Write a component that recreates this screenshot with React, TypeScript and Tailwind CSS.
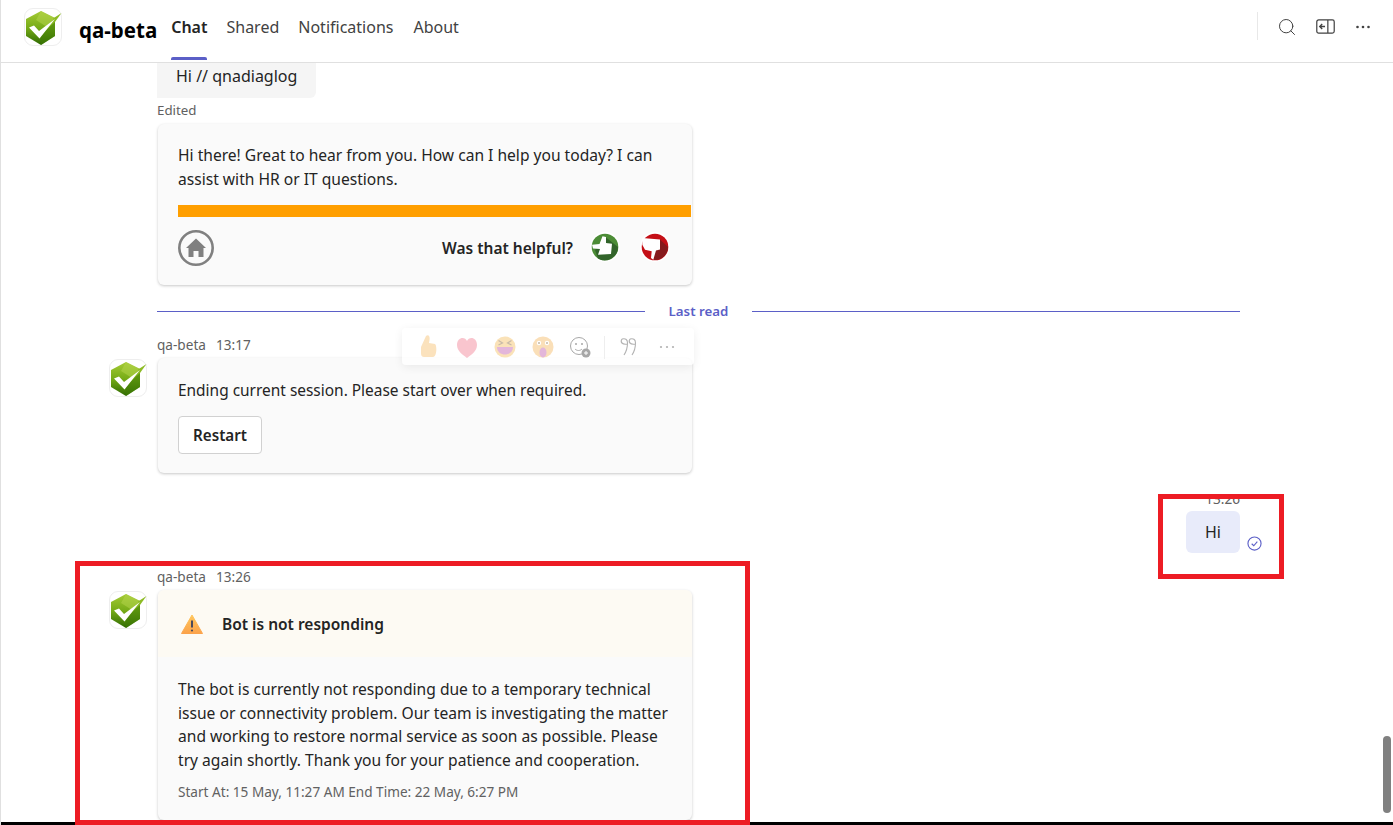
import { Search } from "lucide-react";

const font = "font-['Noto_Sans',sans-serif]";

const Logo = ({ className = "" }: { className?: string }) => (
  <div className={`h-[38px] w-[38px] shrink-0 rounded-[9px] border border-[#eeeeee] bg-white ${className}`}>
    <svg viewBox="0 0 38 38" className="h-[38px] w-[38px] -ml-px -mt-px">
      <defs>
        <linearGradient id="hex" x1="0" y1="0" x2="0" y2="1">
          <stop offset="0" stopColor="#a5cb35" />
          <stop offset="0.5" stopColor="#76ab17" />
          <stop offset="1" stopColor="#2f6a02" />
        </linearGradient>
      </defs>
      <path d="M17 3 L31 10 L31 28 L17 37 L2 28 L2 11 Z" fill="url(#hex)" />
      <path d="M17 3 L31 10 L23 19 L12 12 Z" fill="#b2d44a" opacity="0.55" />
      <path d="M17 37 L31 28 L31 14 L17 27 Z" fill="#3f7c06" opacity="0.55" />
      <path d="M29 10.500 L37.500 5 L31 14 Z" fill="#8dbb25" />
      <path d="M5 19.500 L10 17.500 L15 23 L31 11 L15.500 30.500 Z" fill="white" />
    </svg>
  </div>
);

const Card = ({ children, className = "" }: { children: React.ReactNode; className?: string }) => (
  <div className={`w-[534px] rounded-[6px] bg-[#fafafa] shadow-[0_1px_3px_rgba(0,0,0,0.22)] ${className}`}>
    {children}
  </div>
);

const Meta = ({ time }: { time: string }) => (
  <div className="ml-[48px] flex gap-[10px] text-[13.600px] leading-[16px] text-[#616161]">
    <span>qa-beta</span>
    <span>{time}</span>
  </div>
);

const HomeIcon = () => (
  <svg viewBox="0 0 36 36" className="h-[36px] w-[36px]">
    <circle cx="18" cy="18" r="16.700" fill="none" stroke="#808080" strokeWidth="2.600" />
    <path d="M18 8.500 L28 18 L25.500 18 L25.500 27 L20.500 27 L20.500 21 L15.500 21 L15.500 27 L10.500 27 L10.500 18 L8 18 Z" fill="#808080" />
  </svg>
);

const ThumbUp = () => (
  <svg viewBox="0 0 30 30" className="-mt-[2px] h-[30px] w-[30px]">
    <circle cx="15" cy="15" r="15" fill="white" />
    <circle cx="15" cy="15" r="13.300" fill="#4c8c36" />
    <path d="M15.700 5.300 L28 15 A13.300 13.300 0 0 1 8 26.500 L5 18 Z" fill="#32642a" />
    <path d="M2 12.700 L9.500 12 L12.500 4.300 L16 5 L16 11 L22 11.700 L21 22 L8 22.700 L10 17 L3 16.500 Z" fill="white" />
  </svg>
);

const ThumbDown = () => (
  <svg viewBox="0 0 30 30" className="-mt-[2px] h-[30px] w-[30px]">
    <circle cx="15" cy="15" r="15" fill="white" />
    <circle cx="15" cy="15" r="13.300" fill="#c40f16" />
    <path d="M20 7.600 L28 15 A13.300 13.300 0 0 1 14 28 L12 19 Z" fill="#861a1c" />
    <path d="M2.300 6 L20 7.600 L20 17.600 L16 18.500 L13.300 27.700 L11 26 L11.700 19.300 L5 17.700 L2.300 12.700 Z" fill="white" />
  </svg>
);

const ReactionBar = () => (
  <div className="absolute left-[401px] top-[328px] flex h-[37px] w-[292px] items-center rounded-[4px] bg-white/70 shadow-[0_2px_10px_rgba(0,0,0,0.07)]">
    <svg viewBox="0 0 292 37" className="h-full w-full">
      <g opacity="0.36">
        <path d="M19 19 L24 8 C27 6 28 9 27.500 12 L27 15 L33 16 C35 17 35 29 31 29 L22 29 C19 29 19 26 19 24 Z" fill="#f4b04a" />
        <path d="M55 17 C55 9 63 8 65 13 C67 8 75 9 75 17 C75 23 69 27 65 30 C61 27 55 23 55 17 Z" fill="#f0607a" />
        <circle cx="103" cy="19" r="10.500" fill="#f2b03c" />
        <path d="M95 19 L111 19 C111 29 95 29 95 19 Z" fill="#b3389a" />
        <path d="M96.500 12.500 L100.500 15 L96.500 17 M109.500 12.500 L105.500 15 L109.500 17" fill="none" stroke="#6b4312" strokeWidth="1.200" />
        <circle cx="141" cy="19" r="10.500" fill="#f2a83c" />
        <ellipse cx="141" cy="24.500" rx="3.500" ry="5" fill="#b3389a" />
        <circle cx="137" cy="15" r="2.200" fill="white" />
        <circle cx="145" cy="15" r="2.200" fill="white" />
        <circle cx="137" cy="15" r="1" fill="#5c3a10" />
        <circle cx="145" cy="15" r="1" fill="#5c3a10" />
      </g>
      <g opacity="0.55">
        <circle cx="177" cy="18" r="8.500" fill="none" stroke="#616161" strokeWidth="1" />
        <circle cx="174" cy="16" r="1" fill="#616161" />
        <circle cx="180" cy="16" r="1" fill="#616161" />
        <path d="M173 21 C175 23 178 23 180 21" fill="none" stroke="#616161" />
        <circle cx="184" cy="25" r="4.500" fill="#616161" />
        <path d="M184 23 L184 27 M182 25 L186 25" stroke="white" strokeWidth="1" />
      </g>
      <path d="M202.500 8 L202.500 31" stroke="#eeeeee" />
      <g opacity="0.4" fill="none" stroke="#424242" strokeWidth="1.100">
        <path d="M220 11 C224 10 225.500 12 225.500 15 C225.500 20 224 24 222 27 M220 11 C218 14 220 17 225.500 16" />
        <path d="M228 11 C232 10 233.500 12 233.500 15 C233.500 20 232 24 230 27 M228 11 C226 14 228 17 233.500 16" />
      </g>
      <g opacity="0.4" fill="#424242">
        <circle cx="259" cy="19" r="1.100" />
        <circle cx="265" cy="19" r="1.100" />
        <circle cx="271" cy="19" r="1.100" />
      </g>
    </svg>
  </div>
);

export default function App() {
  return (
    <div className={`${font} relative h-[825px] w-[1393px] overflow-hidden border-l border-[#e0e0e0] bg-white text-[#242424]`}>
      <header className="flex h-[63px] items-stretch border-b border-[#e0e0e0] pl-[23px] pr-[21px]">
        <Logo className="mt-[8px]" />
        <div className="ml-[17px] mt-[16px] text-[20.500px] font-bold leading-[28px] text-black">qa-beta</div>
        <nav className="ml-[14px] flex gap-[19px] text-[16px] text-[#424242]">
          <a className="relative pt-[15px] font-semibold text-[#242424]">
            Chat
            <span className="absolute bottom-[2px] left-0 h-[3px] w-full rounded-t-[2px] bg-[#5b5fc7]" />
          </a>
          <a className="pt-[15px]">Shared</a>
          <a className="pt-[15px]">Notifications</a>
          <a className="ml-[1px] pt-[15px]">About</a>
        </nav>
        <div className="ml-auto flex items-start">
          <div className="mr-[19px] mt-[12px] h-[28px] border-l border-[#e8e8e8]" />
          <Search className="mr-[19px] mt-[17px] h-[20px] w-[20px] text-[#424242]" strokeWidth={1.200} />
          <svg viewBox="0 0 20 16" className="mr-[19px] mt-[19px] h-[15px] w-[19px] text-[#424242]" fill="none" stroke="currentColor">
            <rect x="0.700" y="1" width="18.600" height="14" rx="2" strokeWidth="1.300" />
            <path d="M12.500 1 L12.500 15" strokeWidth="1.300" />
            <path d="M9.500 8 L4 8 M6.500 5.300 L3.800 8 L6.500 10.700" strokeWidth="1.400" />
          </svg>
          <svg viewBox="0 0 18 18" className="mt-[18px] h-[18px] w-[18px]" fill="#424242">
            <circle cx="3.500" cy="9" r="1.300" />
            <circle cx="9" cy="9" r="1.300" />
            <circle cx="14.500" cy="9" r="1.300" />
          </svg>
        </div>
      </header>

      <main>
        <div className="ml-[156px] h-[35px] w-[159px] rounded-br-[6px] bg-[#f5f5f5] pl-[19px] pt-[1px] text-[16px] leading-[24px]">
          Hi // qnadiaglog
        </div>
        <div className="ml-[156px] mt-[3px] text-[13.300px] leading-[18px] text-[#616161]">Edited</div>

        <Card className="ml-[157px] mt-[5px] h-[161px]">
          <div className="px-[20px] pt-[19px] text-[15.600px] leading-[24px]">
            Hi there! Great to hear from you. How can I help you today? I can assist with HR or IT questions.
          </div>
          <div className="ml-[20px] mr-px mt-[14px] h-[12px] bg-[#ff9f00]" />
          <div className="flex items-center pl-[20px] pr-[22px] pt-[13px]">
            <HomeIcon />
            <span className="ml-auto mr-[17px] mt-[2px] text-[15.500px] font-semibold">Was that helpful?</span>
            <ThumbUp />
            <span className="w-[20px]" />
            <ThumbDown />
          </div>
        </Card>

        <div className="ml-[156px] mr-[153px] mt-[16px] flex h-[20px] items-center">
          <div className="h-px flex-1 bg-[#5b5fc7]" />
          <span className="mx-[24px] pt-[2px] text-[13.300px] font-semibold text-[#5b5fc7]">Last read</span>
          <div className="h-px flex-1 bg-[#5b5fc7]" />
        </div>

        <div className="ml-[108px] mt-[16px]">
          <Meta time="13:17" />
          <div className="mt-[5px] flex gap-[11px]">
            <Logo className="mt-px" />
            <Card className="h-[115px] px-[20px] pt-[20px]">
              <div className="text-[15.450px] leading-[24px]">Ending current session. Please start over when required.</div>
              <button className="mt-[14px] flex h-[38px] w-[84px] items-center justify-center rounded-[4px] border border-[#d1d1d1] bg-white text-[15.200px] font-semibold">
                Restart
              </button>
            </Card>
          </div>
        </div>

        <div className="mr-[153px] mt-[18px] flex flex-col items-end">
          <div className="text-[13.600px] leading-[16px] text-[#616161]">13:26</div>
          <div className="relative mt-[4px] flex h-[42px] w-[54px] items-center justify-center rounded-[6px] bg-[#e8ebfa] text-[16px]">
            Hi
            <svg viewBox="0 0 16 16" className="absolute left-[61px] top-[25px] h-[15px] w-[15px]" fill="none" stroke="#5b5fc7">
              <circle cx="8" cy="8" r="7" strokeWidth="1.200" />
              <path d="M5 8.300 L7.200 10.400 L11 6" strokeWidth="1.200" />
            </svg>
          </div>
        </div>

        <div className="ml-[108px] mt-[16px]">
          <Meta time="13:26" />
          <div className="mt-[5px] flex gap-[11px]">
            <Logo className="mt-px" />
            <Card className="h-[230px] overflow-hidden">
              <div className="flex h-[67px] items-center bg-[#fdfaf3] pl-[23px]">
                <svg viewBox="0 0 22 20" className="h-[20px] w-[22px]">
                  <defs>
                    <linearGradient id="warn" x1="0" y1="0" x2="0" y2="1">
                      <stop offset="0" stopColor="#ffc65c" />
                      <stop offset="1" stopColor="#fba24a" />
                    </linearGradient>
                  </defs>
                  <path d="M11 1 L21.500 19.500 L0.500 19.500 Z" fill="url(#warn)" stroke="url(#warn)" strokeLinejoin="round" />
                  <path d="M11 6.500 L11 13.500" stroke="#4a4a5c" strokeWidth="2" />
                  <circle cx="11" cy="16.500" r="1.100" fill="#4a4a5c" />
                </svg>
                <span className="ml-[19px] pt-[2px] text-[15.500px] font-semibold">Bot is not responding</span>
              </div>
              <div className="pl-[20px] pr-[14px] pt-[21px] text-[15.600px] leading-[23.700px]">
                The bot is currently not responding due to a temporary technical issue or connectivity problem. Our team is investigating the matter and working to restore normal service as soon as possible. Please try again shortly. Thank you for your patience and cooperation.
              </div>
              <div className="px-[20px] pt-[10px] text-[13.600px] leading-[18px] text-[#616161]">
                Start At: 15 May, 11:27 AM End Time: 22 May, 6:27 PM
              </div>
            </Card>
          </div>
        </div>
      </main>

      <ReactionBar />

      <div className="absolute left-[1382px] top-[736px] h-[77px] w-[8px] rounded-full bg-[#808080]" />
      <div className="absolute bottom-0 left-[-1px] h-[3px] w-[1393px] bg-black" />
      <div className="absolute left-[74px] top-[561px] h-[264px] w-[675px] border-[5px] border-[#ed1c24]" />
      <div className="absolute left-[1157px] top-[494px] h-[85px] w-[126px] border-[5px] border-[#ed1c24]" />
    </div>
  );
}
